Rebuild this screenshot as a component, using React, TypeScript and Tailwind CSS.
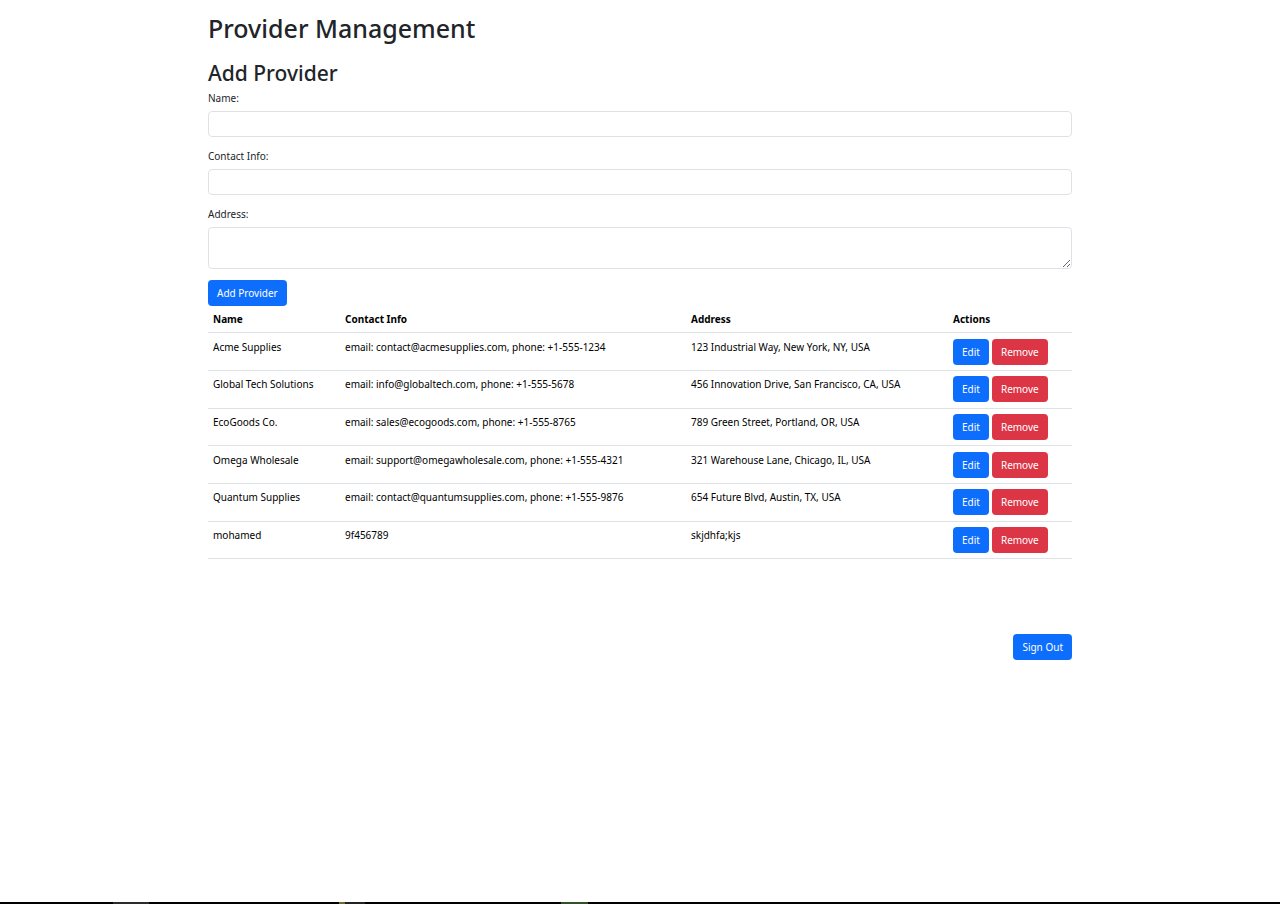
import { useState } from 'react';
import type { ButtonHTMLAttributes, FormEvent } from 'react';

type Provider = { name: string; contact: string; address: string };

const initialProviders: Provider[] = [
  { name: 'Acme Supplies', contact: 'email: contact@acmesupplies.com, phone: +1-555-1234', address: '123 Industrial Way, New York, NY, USA' },
  { name: 'Global Tech Solutions', contact: 'email: info@globaltech.com, phone: +1-555-5678', address: '456 Innovation Drive, San Francisco, CA, USA' },
  { name: 'EcoGoods Co.', contact: 'email: sales@ecogoods.com, phone: +1-555-8765', address: '789 Green Street, Portland, OR, USA' },
  { name: 'Omega Wholesale', contact: 'email: support@omegawholesale.com, phone: +1-555-4321', address: '321 Warehouse Lane, Chicago, IL, USA' },
  { name: 'Quantum Supplies', contact: 'email: contact@quantumsupplies.com, phone: +1-555-9876', address: '654 Future Blvd, Austin, TX, USA' },
  { name: 'mohamed', contact: '9f456789', address: 'skjdhfa;kjs' },
];

const fieldClass =
  'block w-full rounded border border-[#dee2e6] bg-white px-2 py-1 leading-4 focus:border-[#86b7fe] focus:outline-none';

function Button({ danger = false, ...props }: ButtonHTMLAttributes<HTMLButtonElement> & { danger?: boolean }) {
  return (
    <button
      className={`h-[26px] rounded px-[9px] leading-4 whitespace-nowrap text-white ${danger ? 'bg-[#dc3545] hover:bg-[#bb2d3b]' : 'bg-[#0d6efd] hover:bg-[#0b5ed7]'}`}
      {...props}
    />
  );
}

export default function App() {
  const [providers, setProviders] = useState(initialProviders);
  const [draft, setDraft] = useState<Provider>({ name: '', contact: '', address: '' });

  const addProvider = (event: FormEvent) => {
    event.preventDefault();
    if (!draft.name) return;
    setProviders([...providers, draft]);
    setDraft({ name: '', contact: '', address: '' });
  };

  const editProvider = (index: number) => {
    setDraft(providers[index]);
    setProviders(providers.filter((_, i) => i !== index));
  };

  return (
    <div className="flex min-h-screen flex-col bg-white font-['Noto_Sans',sans-serif] text-[10px] leading-4 text-[#212529]">
      <main className="mx-auto w-full max-w-[880px] px-2 pt-3">
        <h1 className="text-[25px] leading-8 font-medium">Provider Management</h1>
        <h2 className="mt-4 text-[21px] leading-[26px] font-medium">Add Provider</h2>

        <form onSubmit={addProvider} className="mt-1">
          <div className="mb-[11px]">
            <label htmlFor="name" className="mb-[5px] block">Name:</label>
            <input id="name" className={`${fieldClass} h-[26px]`} value={draft.name} onChange={(e) => setDraft({ ...draft, name: e.target.value })} />
          </div>
          <div className="mb-[11px]">
            <label htmlFor="contact" className="mb-[5px] block">Contact Info:</label>
            <input id="contact" className={`${fieldClass} h-[26px]`} value={draft.contact} onChange={(e) => setDraft({ ...draft, contact: e.target.value })} />
          </div>
          <div className="mb-[11px]">
            <label htmlFor="address" className="mb-[5px] block">Address:</label>
            <textarea id="address" className={`${fieldClass} h-[42px] resize-y`} value={draft.address} onChange={(e) => setDraft({ ...draft, address: e.target.value })} />
          </div>
          <Button type="submit">Add Provider</Button>
        </form>

        <table className="w-full table-fixed text-left text-black">
          <colgroup>
            <col className="w-[132px]" />
            <col className="w-[346px]" />
            <col className="w-[262px]" />
            <col />
          </colgroup>
          <thead>
            <tr className="border-b border-[#dee2e6]">
              {['Name', 'Contact Info', 'Address', 'Actions'].map((title) => (
                <th key={title} scope="col" className="px-[5px] py-[5px] font-bold">{title}</th>
              ))}
            </tr>
          </thead>
          <tbody>
            {providers.map((provider, index) => (
              <tr key={provider.name} className="h-[38px] border-b border-[#dee2e6] align-top nth-[3n]:h-[37px] *:px-[5px] *:pt-[5px] nth-[3n+1]:*:pt-[6px]">
                <td>{provider.name}</td>
                <td>{provider.contact}</td>
                <td>{provider.address}</td>
                <td>
                  <div className="flex gap-[3px]">
                    <Button type="button" onClick={() => editProvider(index)}>Edit</Button>
                    <Button type="button" danger onClick={() => setProviders(providers.filter((_, i) => i !== index))}>Remove</Button>
                  </div>
                </td>
              </tr>
            ))}
          </tbody>
        </table>

        <div className="mt-[75px] flex justify-end">
          <Button type="button">Sign Out</Button>
        </div>
      </main>

      <footer className="mt-auto flex h-[2px] bg-black">
        <div className="ml-[113px] w-9 bg-[#2b2b2b]" />
        <div className="ml-[190px] w-[6px] bg-[#6b6b3a]" />
        <div className="w-5 bg-[#222222]" />
        <div className="ml-[196px] w-[27px] bg-[#33502a]" />
      </footer>
    </div>
  );
}
